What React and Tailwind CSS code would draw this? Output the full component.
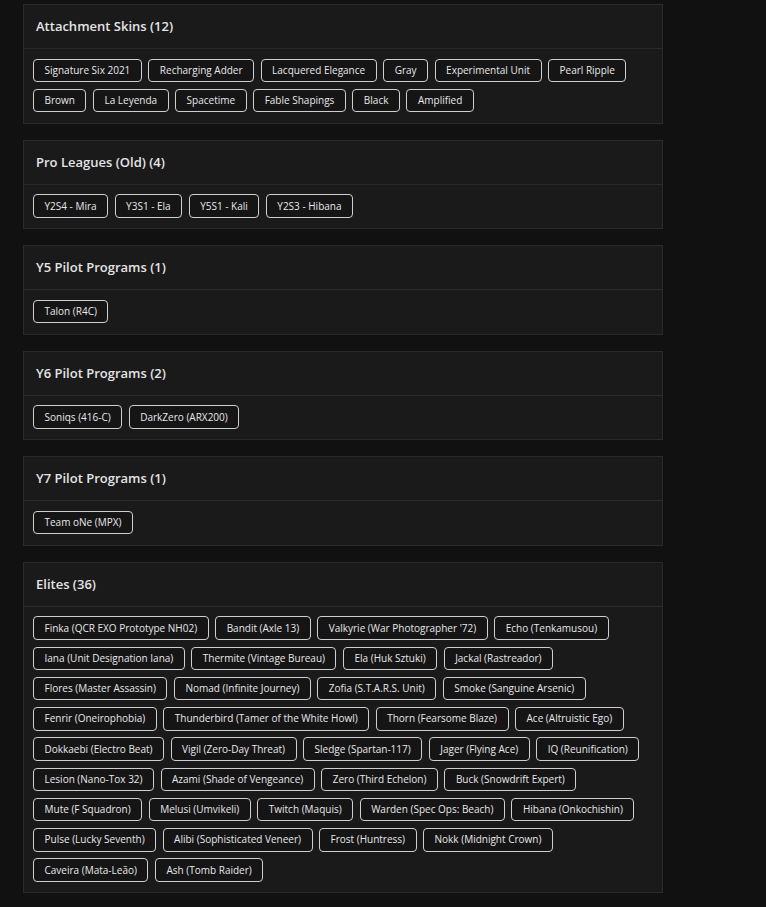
const sections = [
  {
    title: 'Attachment Skins',
    items: [
      'Signature Six 2021',
      'Recharging Adder',
      'Lacquered Elegance',
      'Gray',
      'Experimental Unit',
      'Pearl Ripple',
      'Brown',
      'La Leyenda',
      'Spacetime',
      'Fable Shapings',
      'Black',
      'Amplified',
    ],
  },
  {
    title: 'Pro Leagues (Old)',
    items: ['Y2S4 - Mira', 'Y3S1 - Ela', 'Y5S1 - Kali', 'Y2S3 - Hibana'],
  },
  { title: 'Y5 Pilot Programs', items: ['Talon (R4C)'] },
  { title: 'Y6 Pilot Programs', items: ['Soniqs (416-C)', 'DarkZero (ARX200)'] },
  { title: 'Y7 Pilot Programs', items: ['Team oNe (MPX)'] },
  {
    title: 'Elites',
    items: [
      'Finka (QCR EXO Prototype NH02)',
      'Bandit (Axle 13)',
      "Valkyrie (War Photographer '72)",
      'Echo (Tenkamusou)',
      'Iana (Unit Designation Iana)',
      'Thermite (Vintage Bureau)',
      'Ela (Huk Sztuki)',
      'Jackal (Rastreador)',
      'Flores (Master Assassin)',
      'Nomad (Infinite Journey)',
      'Zofia (S.T.A.R.S. Unit)',
      'Smoke (Sanguine Arsenic)',
      'Fenrir (Oneirophobia)',
      'Thunderbird (Tamer of the White Howl)',
      'Thorn (Fearsome Blaze)',
      'Ace (Altruistic Ego)',
      'Dokkaebi (Electro Beat)',
      'Vigil (Zero-Day Threat)',
      'Sledge (Spartan-117)',
      'Jager (Flying Ace)',
      'IQ (Reunification)',
      'Lesion (Nano-Tox 32)',
      'Azami (Shade of Vengeance)',
      'Zero (Third Echelon)',
      'Buck (Snowdrift Expert)',
      'Mute (F Squadron)',
      'Melusi (Umvikeli)',
      'Twitch (Maquis)',
      'Warden (Spec Ops: Beach)',
      'Hibana (Onkochishin)',
      'Pulse (Lucky Seventh)',
      'Alibi (Sophisticated Veneer)',
      'Frost (Huntress)',
      'Nokk (Midnight Crown)',
      'Caveira (Mata-Leão)',
      'Ash (Tomb Raider)',
    ],
  },
];

function Section({ title, items }) {
  return (
    <div className="w-[640px] border border-[#2a2a2a] bg-[#1a1a1a]">
      <div className="h-[44px] flex items-center px-[12px] border-b border-[#2a2a2a]">
        <h2 className="text-[13px] font-semibold text-[#e4e4e4]">
          {title} ({items.length})
        </h2>
      </div>
      <div className="flex flex-wrap gap-x-[6.5px] gap-y-[6.75px] px-[9px] pt-[9.5px] pb-[10.5px]">
        {items.map((item) => (
          <span
            key={item}
            className="h-[23.5px] flex items-center px-[10.5px] rounded-[4px] border border-[#cfcfcf] bg-[#151515] text-[10px] text-[#e8e8e8] whitespace-nowrap"
          >
            {item}
          </span>
        ))}
      </div>
    </div>
  );
}

export default function App() {
  return (
    <div
      className="min-h-[907px] bg-[#111111] pl-[23px] pt-[4px] pb-[15px] flex flex-col gap-[16px]"
      style={{ fontFamily: '"Open Sans", "Noto Sans", sans-serif' }}
    >
      {sections.map((s) => (
        <Section key={s.title} title={s.title} items={s.items} />
      ))}
    </div>
  );
}
